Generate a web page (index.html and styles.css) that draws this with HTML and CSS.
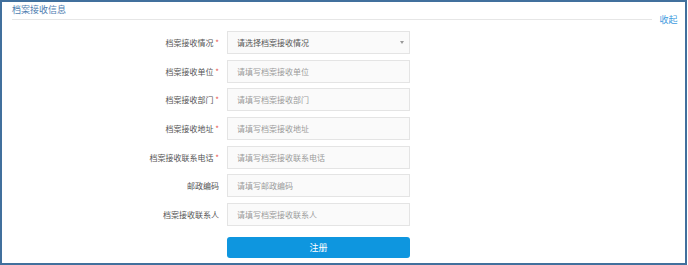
FILE: index.html
```html
<!DOCTYPE html>
<html lang="zh-CN">
<head>
    <meta charset="UTF-8">
    <title>档案接收信息</title>
    <link rel="stylesheet" href="styles.css">
</head>
<body>
    <div class="panel">
        <div class="panel-head">
            <div class="panel-title">档案接收信息</div>
            <a class="panel-toggle" href="#">收起</a>
        </div>
        <form class="form">
            <div class="form-row">
                <label class="form-label">档案接收情况 <em>*</em></label>
                <span class="select-wrap">
                    <select class="form-field">
                        <option>请选择档案接收情况</option>
                    </select>
                </span>
            </div>
            <div class="form-row">
                <label class="form-label">档案接收单位 <em>*</em></label>
                <input class="form-field" type="text" placeholder="请填写档案接收单位">
            </div>
            <div class="form-row">
                <label class="form-label">档案接收部门 <em>*</em></label>
                <input class="form-field" type="text" placeholder="请填写档案接收部门">
            </div>
            <div class="form-row">
                <label class="form-label">档案接收地址 <em>*</em></label>
                <input class="form-field" type="text" placeholder="请填写档案接收地址">
            </div>
            <div class="form-row">
                <label class="form-label">档案接收联系电话 <em>*</em></label>
                <input class="form-field" type="text" placeholder="请填写档案接收联系电话">
            </div>
            <div class="form-row">
                <label class="form-label">邮政编码</label>
                <input class="form-field" type="text" placeholder="请填写邮政编码">
            </div>
            <div class="form-row">
                <label class="form-label">档案接收联系人</label>
                <input class="form-field" type="text" placeholder="请填写档案接收联系人">
            </div>
            <div class="form-row form-actions">
                <button class="btn-submit" type="button">注册</button>
            </div>
        </form>
    </div>
</body>
</html>
```

FILE: styles.css
```css
body {
    margin: 0;
    font-family: "Noto Sans CJK SC", "Noto Sans", sans-serif;
    background: #fff;
}
.panel {
    width: 687px;
    height: 265px;
    box-sizing: border-box;
    border: 2px solid #41709d;
    background: #fff;
}
.panel-head {
    display: flex;
    align-items: flex-end;
    height: 18px;
    padding-left: 10px;
}
.panel-title {
    flex: 1;
    height: 17px;
    line-height: 16px;
    font-size: 9px;
    color: #4d7db0;
    border-bottom: 1px solid #e6e6e6;
}
.panel-toggle {
    width: 33px;
    text-align: center;
    font-size: 9px;
    line-height: 10px;
    margin-bottom: -5px;
    color: #3f9ce0;
    text-decoration: none;
}
.form {
    margin-top: 11px;
    display: flex;
    flex-direction: column;
    gap: 5.67px;
}
.form-row {
    display: flex;
    align-items: center;
    gap: 8px;
}
.form-label {
    width: 217px;
    text-align: right;
    font-size: 8px;
    color: #555;
}
.form-label em {
    font-style: normal;
    color: #e8574f;
}
.form-field {
    display: block;
    width: 183px;
    height: 23px;
    box-sizing: border-box;
    margin: 0;
    padding: 0 9px;
    border: 1px solid #e4e4e4;
    border-radius: 0;
    background: #fafafa;
    font-family: inherit;
    font-size: 8px;
    color: #555;
    outline: none;
}
.form-field::placeholder {
    color: #9a9a9a;
}
.select-wrap {
    position: relative;
    display: block;
}
.select-wrap select {
    appearance: none;
    -webkit-appearance: none;
}
.select-wrap::after {
    content: "";
    position: absolute;
    right: 6px;
    top: 10px;
    border-left: 2px solid transparent;
    border-right: 2px solid transparent;
    border-top: 3px solid #999;
}
.form-actions {
    margin-top: 5px;
    padding-left: 225px;
}
.btn-submit {
    width: 183px;
    height: 21px;
    border: none;
    border-radius: 3px;
    background: #0e96df;
    color: #fff;
    font-family: inherit;
    font-size: 9px;
    cursor: pointer;
}
```
